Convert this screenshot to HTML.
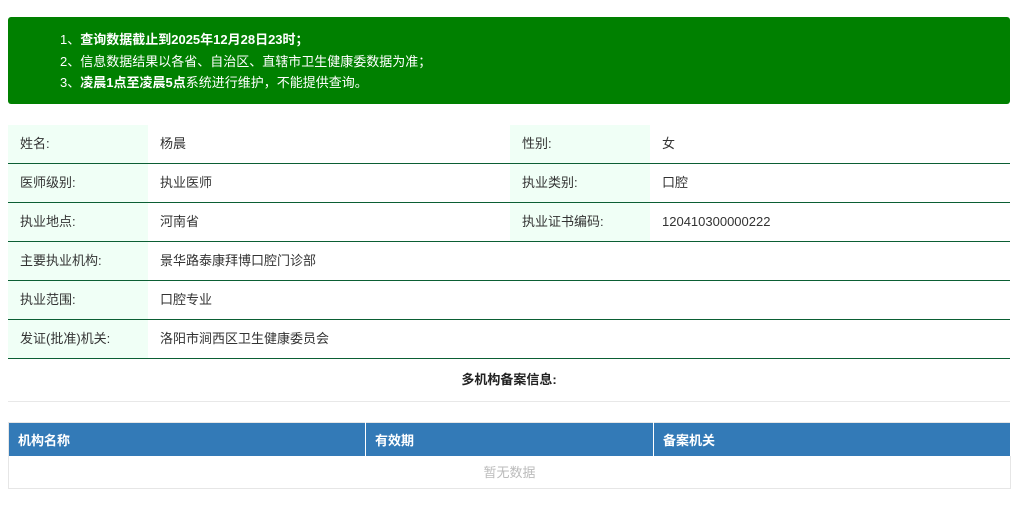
<!DOCTYPE html>
<html><head><meta charset="utf-8"><style>
*{margin:0;padding:0;box-sizing:border-box}
body{width:1021px;height:528px;background:#fff;font-family:"Liberation Sans","Noto Sans CJK SC",sans-serif;font-size:13px;color:#333;position:relative;overflow:hidden}
.notice{position:absolute;left:8px;top:17px;width:1002px;height:87px;background:#008000;border-radius:3px;color:#fff;padding:12px 0 0 52px;line-height:21.5px;font-size:13px}
.notice b{font-weight:bold}
.row{position:absolute;left:8px;width:1002px;height:39px;border-bottom:1px solid #0b5e34;line-height:38px}
.row div{position:absolute;top:0;height:38px;padding-left:12px}
.l{background:#f0fff6;width:140px}
.title{position:absolute;left:8px;top:359px;width:1002px;height:43px;border-bottom:1px solid #e8e8e8;text-align:center;font-weight:bold;line-height:42px;color:#222}
table.list{position:absolute;left:8px;top:422px;width:1003px;border-collapse:collapse;border:1px solid #e6e6e6}
table.list th{background:#337ab7;color:#fff;text-align:left;height:33px;padding:0 9px;font-weight:bold;border-right:1px solid #fff}
table.list td{height:33px;text-align:center;color:#bbb}
</style></head><body>
<div class="notice">
<div>1、<b>查询数据截止到2025年12月28日23时；</b></div>
<div>2、信息数据结果以各省、自治区、直辖市卫生健康委数据为准；</div>
<div>3、<b>凌晨1点至凌晨5点</b>系统进行维护，不能提供查询。</div>
</div>
<div class="row" style="top:125px"><div class="l" style="left:0">姓名:</div><div style="left:140px">杨晨</div><div class="l" style="left:502px">性别:</div><div style="left:642px">女</div></div>
<div class="row" style="top:164px"><div class="l" style="left:0">医师级别:</div><div style="left:140px">执业医师</div><div class="l" style="left:502px">执业类别:</div><div style="left:642px">口腔</div></div>
<div class="row" style="top:203px"><div class="l" style="left:0">执业地点:</div><div style="left:140px">河南省</div><div class="l" style="left:502px">执业证书编码:</div><div style="left:642px">120410300000222</div></div>
<div class="row" style="top:242px"><div class="l" style="left:0">主要执业机构:</div><div style="left:140px">景华路泰康拜博口腔门诊部</div></div>
<div class="row" style="top:281px"><div class="l" style="left:0">执业范围:</div><div style="left:140px">口腔专业</div></div>
<div class="row" style="top:320px"><div class="l" style="left:0">发证(批准)机关:</div><div style="left:140px">洛阳市涧西区卫生健康委员会</div></div>
<div class="title">多机构备案信息:</div>
<table class="list">
<tr><th style="width:357px">机构名称</th><th style="width:288px">有效期</th><th>备案机关</th></tr>
<tr><td colspan="3">暂无数据</td></tr>
</table>
</body></html>
